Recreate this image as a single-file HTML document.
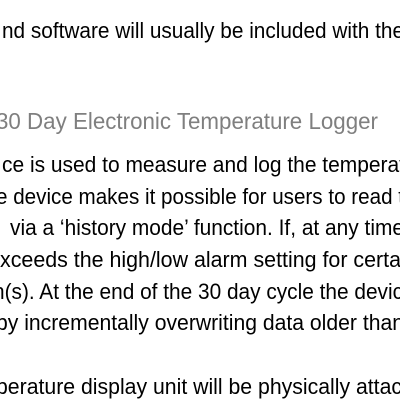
<!DOCTYPE html>
<html><head><meta charset="utf-8"><style>
html,body{margin:0;padding:0;background:#fff;width:400px;height:400px;overflow:hidden}
svg{display:block}
text{font-family:"Liberation Sans",sans-serif;font-size:22px;fill:#000}
.h{fill:#7f7f7f;font-size:23px}
</style></head><body>
<svg width="400" height="400" viewBox="0 0 400 400">
<text x="2" y="38" textLength="402" lengthAdjust="spacingAndGlyphs">nd software will usually be included with the</text>
<text class="h" x="-4" y="129" textLength="382" lengthAdjust="spacingAndGlyphs">30 Day Electronic Temperature Logger</text>
<text x="2" y="172" textLength="403" lengthAdjust="spacingAndGlyphs">ce is used to measure and log the temperat</text>
<text x="-4" y="204" textLength="408" lengthAdjust="spacingAndGlyphs">e device makes it possible for users to read t</text>
<text x="10" y="235" textLength="394" lengthAdjust="spacingAndGlyphs">via a ‘history mode’ function. If, at any time</text>
<text x="0" y="267" textLength="401" lengthAdjust="spacingAndGlyphs">xceeds the high/low alarm setting for certa</text>
<text x="-7" y="299" textLength="410" lengthAdjust="spacingAndGlyphs">n(s). At the end of the 30 day cycle the devic</text>
<text x="-4" y="330" textLength="408" lengthAdjust="spacingAndGlyphs">by incrementally overwriting data older than</text>
<text x="-4" y="394" textLength="406" lengthAdjust="spacingAndGlyphs">perature display unit will be physically attac</text>
</svg>
</body></html>
